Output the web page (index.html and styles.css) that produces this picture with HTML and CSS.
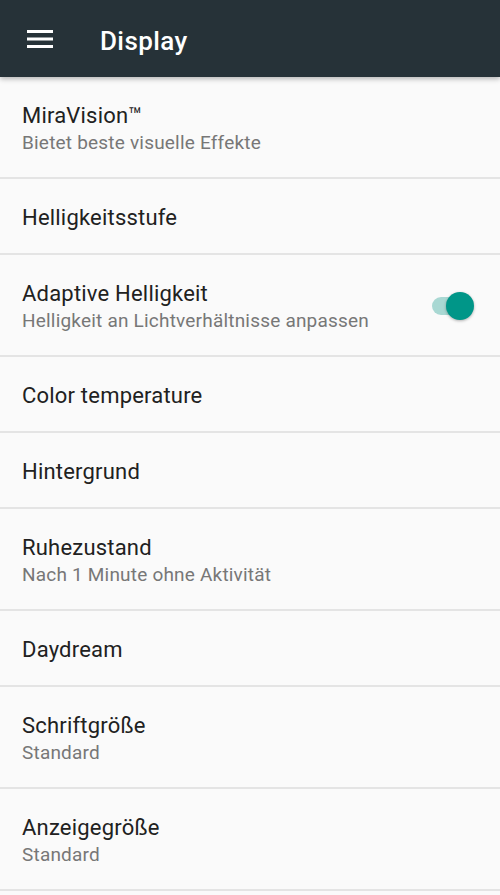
FILE: index.html
```html
<!DOCTYPE html>
<html lang="de">
<head>
<meta charset="utf-8">
<title>Display</title>
<link rel="stylesheet" href="styles.css">
</head>
<body>
<div class="screen">
  <header class="appbar">
    <svg class="menu" width="26" height="18" viewBox="0 0 26 18" aria-hidden="true">
      <rect x="0" y="0" width="26" height="3" fill="#fff"/>
      <rect x="0" y="7.5" width="26" height="3" fill="#fff"/>
      <rect x="0" y="15" width="26" height="3" fill="#fff"/>
    </svg>
    <h1 class="title">Display</h1>
  </header>
  <ul class="list">
    <li class="item two"><div class="text"><span class="primary">MiraVision™</span><span class="secondary">Bietet beste visuelle Effekte</span></div></li>
    <li class="item"><div class="text"><span class="primary">Helligkeitsstufe</span></div></li>
    <li class="item two"><div class="text"><span class="primary">Adaptive Helligkeit</span><span class="secondary">Helligkeit an Lichtverhältnisse anpassen</span></div>
      <div class="switch"><span class="track"></span><span class="thumb"></span></div></li>
    <li class="item"><div class="text"><span class="primary">Color temperature</span></div></li>
    <li class="item"><div class="text"><span class="primary">Hintergrund</span></div></li>
    <li class="item two"><div class="text"><span class="primary">Ruhezustand</span><span class="secondary">Nach 1 Minute ohne Aktivität</span></div></li>
    <li class="item"><div class="text"><span class="primary">Daydream</span></div></li>
    <li class="item two"><div class="text"><span class="primary">Schriftgröße</span><span class="secondary">Standard</span></div></li>
    <li class="item two"><div class="text"><span class="primary">Anzeigegröße</span><span class="secondary">Standard</span></div></li>
  </ul>
</div>
</body>
</html>
```
FILE: styles.css
```css
html, body {
  margin: 0;
  padding: 0;
  background: #fafafa;
}
body {
  font-family: Roboto, "Noto Sans", sans-serif;
  width: 500px;
  height: 895px;
  overflow: hidden;
}
.screen {
  display: flex;
  flex-direction: column;
}
.appbar {
  position: relative;
  z-index: 1;
  height: 77px;
  background: #263238;
  display: flex;
  align-items: center;
  box-shadow: 0 2px 5px rgba(0,0,0,0.28);
}
.menu {
  margin-left: 27px;
  flex: none;
}
.title {
  margin: 0 0 0 47px;
  padding-top: 5px;
  color: #ffffff;
  font-size: 26px;
  font-weight: 500;
  letter-spacing: 0.4px;
}
.list {
  list-style: none;
  margin: 0;
  padding: 0;
}
.item {
  display: flex;
  align-items: flex-start;
  padding: 25px 27px 22px 22px;
  height: 27px;
  border-bottom: 2px solid #e4e4e4;
}
.item.two {
  height: 55px;
  padding-bottom: 20px;
}
.text {
  flex: 1;
  display: flex;
  flex-direction: column;
}
.primary {
  font-size: 22px;
  line-height: 27px;
  color: #212121;
  letter-spacing: 0.2px;
}
.secondary {
  font-size: 19px;
  line-height: 28px;
  color: #777777;
  letter-spacing: 0.2px;
}
.switch {
  position: relative;
  width: 46px;
  height: 30px;
  margin-top: 11px;
  flex: none;
}
.track {
  position: absolute;
  left: 5px;
  top: 6px;
  width: 38px;
  height: 18px;
  border-radius: 9px;
  background: #a9d8d3;
}
.thumb {
  position: absolute;
  right: -1px;
  top: 1px;
  width: 28px;
  height: 28px;
  border-radius: 50%;
  background: #009688;
  box-shadow: 0 1px 3px rgba(0,0,0,0.3);
}
```
